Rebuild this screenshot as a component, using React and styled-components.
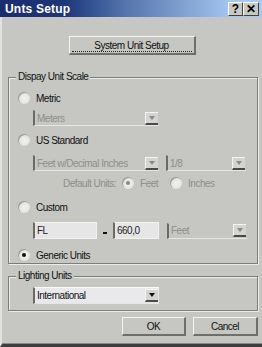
import React from 'react';
import styled, { createGlobalStyle } from 'styled-components';

const GlobalStyle = createGlobalStyle`
  html, body {
    margin: 0;
    padding: 0;
    background: #c6c7c3;
  }
  * {
    box-sizing: border-box;
  }
`;

const Window = styled.div`
  width: 262px;
  height: 347px;
  background: #c6c7c3;
  font-family: "Liberation Sans", Arial, sans-serif;
  font-size: 10px;
  letter-spacing: -0.5px;
  color: #111;
  display: flex;
  flex-direction: column;
  border-left: 2px solid #e2e3df;
  border-bottom: 3px solid #3e3e3e;
  box-shadow: inset 0 -1px 0 #8a8a86;
`;

const TitleBar = styled.div`
  height: 17px;
  margin-left: -2px;
  display: flex;
  align-items: center;
  padding: 0 3px 0 5px;
  background: linear-gradient(to right, #1b2d6e 0%, #1e3577 24%, #365595 36%, #5675ae 48%, #6a89bd 58%, #7d9dcc 68%, #90b0de 78%, #a4c6ef 88%, #a8caf2 100%);
`;

const Title = styled.span`
  flex: 1;
  color: #fff;
  font-weight: bold;
  font-size: 12px;
  letter-spacing: 0.2px;
`;

const CaptionButton = styled.div`
  width: ${p => p.$w}px;
  height: 14px;
  background: #c8c9c5;
  border-top: 1px solid #fff;
  border-left: 1px solid #fff;
  border-right: 1px solid #404040;
  border-bottom: 1px solid #404040;
  display: flex;
  align-items: center;
  justify-content: center;
  color: #000;
  font-weight: bold;
  font-size: 12px;
  letter-spacing: 0;
  line-height: 1;
`;

const Body = styled.div`
  flex: 1;
  display: flex;
  flex-direction: column;
  padding: 0 4px 0 6px;
`;

const TopRow = styled.div`
  display: flex;
  justify-content: center;
  padding-top: 19px;
  padding-right: 2px;
`;

const PushButton = styled.div`
  width: ${p => p.$w}px;
  height: ${p => p.$h}px;
  border-top: 1px solid #f4f4f2;
  border-left: 1px solid #f4f4f2;
  border-right: 2px solid #6e6e6c;
  border-bottom: 2px solid #6e6e6c;
  display: flex;
  align-items: center;
  justify-content: center;
  position: relative;
  color: #111;
`;

const FocusRing = styled.div`
  position: absolute;
  left: 2px;
  right: 2px;
  bottom: 1px;
  border-bottom: 1px dotted #222;
`;

const Group = styled.div`
  position: relative;
  margin-top: ${p => p.$top}px;
  border: 1px solid #7c7c7a;
  box-shadow: inset 1px 1px 0 #ececea, 1px 1px 0 #ececea;
  display: flex;
  flex-direction: column;
  padding: 0 0 ${p => p.$bottom}px 9px;
`;

const Legend = styled.span`
  position: absolute;
  top: -7px;
  left: 7px;
  padding: 0 2px;
  background: #c6c7c3;
  line-height: 12px;
`;

const Row = styled.div`
  display: flex;
  align-items: center;
  height: ${p => p.$h || 14}px;
  margin-top: ${p => p.$top}px;
  padding-left: ${p => p.$indent || 0}px;
  gap: ${p => p.$gap || 0}px;
`;

const RadioCircle = styled.span`
  width: 12px;
  height: 12px;
  border-radius: 50%;
  flex: none;
  background: radial-gradient(circle at 55% 55%, #f2f2f0 0%, #e4e4e2 55%, #b4b4b2 100%);
  box-shadow: inset 1px 1px 0 #9a9a98;
  display: flex;
  align-items: center;
  justify-content: center;
  &::after {
    content: '';
    width: 4px;
    height: 4px;
    border-radius: 50%;
    background: ${p => (p.$on ? (p.$dim ? '#8a8a88' : '#111') : 'transparent')};
  }
`;

const Label = styled.span`
  margin-left: ${p => p.$ml ?? 6}px;
  color: ${p => (p.$dim ? '#8e8e8c' : '#111')};
  white-space: nowrap;
`;

const Combo = styled.div`
  width: ${p => p.$w}px;
  height: ${p => p.$h || 16}px;
  display: flex;
  align-items: center;
  background: ${p => (p.$active ? '#e9e9eb' : 'transparent')};
  border-left: 2px solid #6a6a68;
  border-top: 1px solid ${p => (p.$active ? '#fafafa' : 'transparent')};
  border-bottom: 1px solid #e6e6e4;
  color: ${p => (p.$active ? '#111' : '#8e8e8c')};
  padding-left: 2px;
  position: relative;
`;

const ComboText = styled.span`
  flex: 1;
  white-space: nowrap;
`;

const ArrowButton = styled.div`
  width: 13px;
  height: 13px;
  margin-right: 1px;
  background: #d4d4d2;
  border-top: 1px solid #f4f4f4;
  border-left: 1px solid #f4f4f4;
  border-bottom: 2px solid #4a4a48;
  display: flex;
  align-items: center;
  justify-content: center;
  &::after {
    content: '';
    border-left: 3px solid transparent;
    border-right: 3px solid transparent;
    border-top: 4px solid ${p => (p.$active ? '#111' : '#8a8a88')};
  }
`;

const TextBox = styled.div`
  width: ${p => p.$w}px;
  height: 17px;
  background: #e6e6e6;
  border-left: 2px solid #6a6a68;
  border-top: 1px solid #f2f2f2;
  border-bottom: 1px solid #f2f2f2;
  border-right: 1px solid #f2f2f2;
  display: flex;
  align-items: center;
  padding-left: 2px;
  color: #222;
`;

const Dash = styled.span`
  width: 4px;
  height: 2px;
  background: #111;
  margin-top: 5px;
`;

const Footer = styled.div`
  display: flex;
  justify-content: flex-end;
  gap: 7px;
  margin-top: 6px;
`;

function Radio({ label, on, dim }) {
  return (
    <>
      <RadioCircle $on={on} $dim={dim} />
      <Label $dim={dim}>{label}</Label>
    </>
  );
}

function Dropdown({ w, text, active }) {
  return (
    <Combo $w={w} $active={active} $h={active ? 17 : 16}>
      <ComboText>{text}</ComboText>
      <ArrowButton $active={active} />
    </Combo>
  );
}

export default function App() {
  return (
    <>
      <GlobalStyle />
      <Window>
        <TitleBar>
          <Title>Unts Setup</Title>
          <CaptionButton $w={15}>?</CaptionButton>
          <CaptionButton $w={16}>✕</CaptionButton>
        </TitleBar>
        <Body>
          <TopRow>
            <PushButton $w={127} $h={19}>
              System Unit Setup
              <FocusRing />
            </PushButton>
          </TopRow>

          <Group $top={22} $bottom={1}>
            <Legend>Dispay Unit Scale</Legend>
            <Row $top={13}>
              <Radio label="Metric" />
            </Row>
            <Row $top={5} $h={16} $indent={15}>
              <Dropdown w={126} text="Meters" />
            </Row>
            <Row $top={7}>
              <Radio label="US Standard" />
            </Row>
            <Row $top={8} $h={16} $indent={15} $gap={7}>
              <Dropdown w={126} text="Feet w/Decimal Inches" />
              <Dropdown w={80} text="1/8" />
            </Row>
            <Row $top={5} $indent={45}>
              <Label $dim $ml={0}>Default Units:</Label>
              <Row $top={0} $indent={6}>
                <Radio label="Feet" on dim />
              </Row>
              <Row $top={0} $indent={12}>
                <Radio label="Inches" dim />
              </Row>
            </Row>
            <Row $top={10}>
              <Radio label="Custom" />
            </Row>
            <Row $top={8} $h={17} $indent={15} $gap={6}>
              <TextBox $w={64}>FL</TextBox>
              <Dash />
              <TextBox $w={46}>660,0</TextBox>
              <Row $top={0} $indent={2}>
                <Dropdown w={80} text="Feet" />
              </Row>
            </Row>
            <Row $top={9}>
              <Radio label="Generic Units" on />
            </Row>
          </Group>

          <Group $top={12} $bottom={6}>
            <Legend>Lighting Units</Legend>
            <Row $top={10} $h={17} $indent={15}>
              <Dropdown w={126} text="International" active />
            </Row>
          </Group>

          <Footer>
            <PushButton $w={64} $h={19}>OK</PushButton>
            <PushButton $w={65} $h={19}>Cancel</PushButton>
          </Footer>
        </Body>
      </Window>
    </>
  );
}
